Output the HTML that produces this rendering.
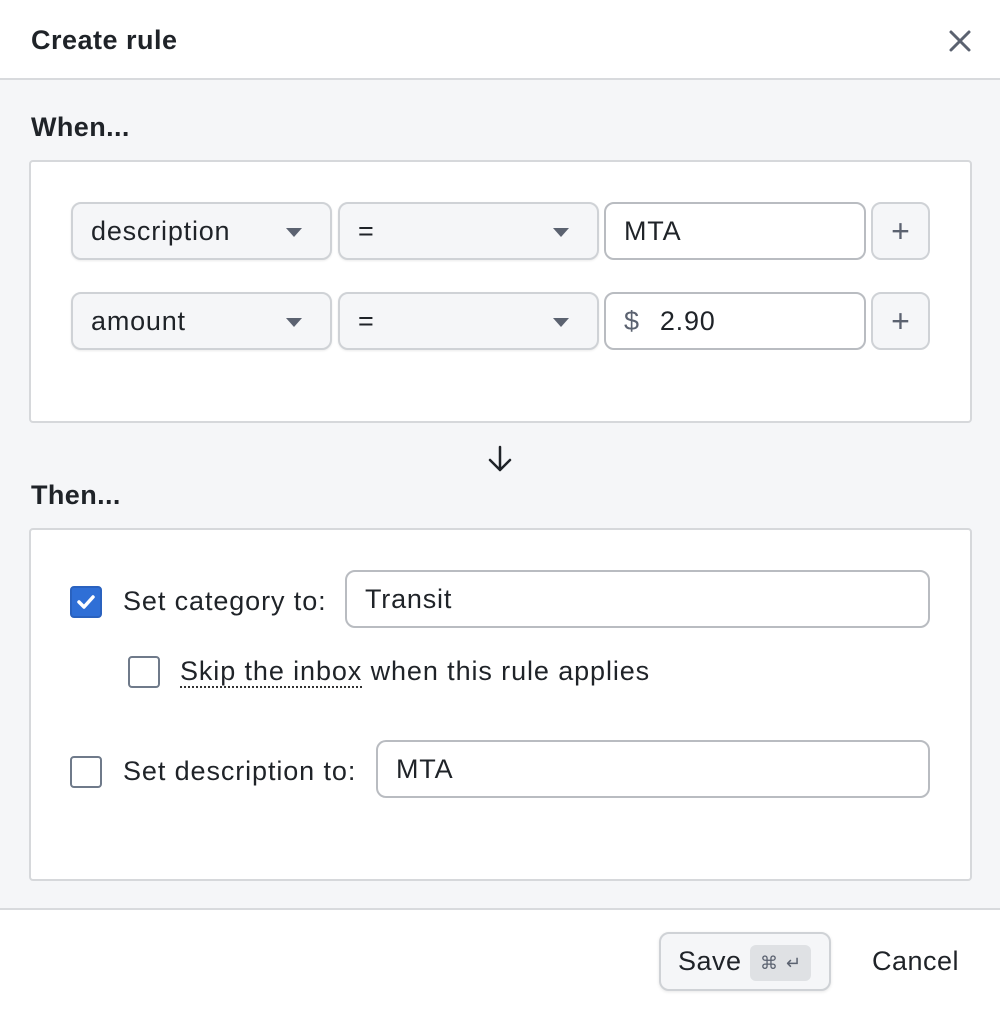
<!DOCTYPE html>
<html><head><style>
*{box-sizing:border-box;margin:0;padding:0}
body{width:1000px;height:1011px;overflow:hidden;font-family:"Liberation Sans",Arial,sans-serif;color:#1f2328;background:#fff;position:relative}
.abs{position:absolute}
.hdr{left:0;top:0;width:1000px;height:80px;border-bottom:2px solid #d8dadd;background:#fff}
.title{left:31px;top:25px;font-size:27px;font-weight:bold;letter-spacing:0.5px}
.body{left:0;top:80px;width:1000px;height:830px;background:#f5f6f8;border-bottom:2px solid #d8dadd}
.h{font-size:27px;font-weight:bold;letter-spacing:0.4px}
.card{background:#fff;border:2px solid #d6d8db;border-radius:4px}
.sel{background:#f5f6f8;border:2px solid #cfd2d6;border-radius:10px;font-size:27px;letter-spacing:0.8px;padding-left:18px;display:flex;align-items:center;box-shadow:0 1px 2px rgba(0,0,0,.08)}
.sel .tri{position:absolute;right:28px;top:24px;width:0;height:0;border-left:8px solid transparent;border-right:8px solid transparent;border-top:9px solid #5b6270}
.inp{background:#fff;border:2px solid #b9bcc1;border-radius:10px;font-size:27px;letter-spacing:0.8px;padding-left:18px;display:flex;align-items:center}
.plus{background:#f5f6f8;border:2px solid #cfd2d6;border-radius:10px;font-size:32px;color:#5b6270;display:flex;align-items:center;justify-content:center}
.cb{width:32px;height:32px;border:2px solid #6f7a8a;border-radius:4px;background:#fff}
.lbl{font-size:27px;letter-spacing:0.9px}
</style></head><body>
<div class="abs hdr"></div>
<div class="abs title">Create rule</div>
<svg class="abs" style="left:948px;top:29px" width="24" height="24" viewBox="0 0 24 24"><path d="M3 3L21 21M21 3L3 21" stroke="#5b6270" stroke-width="3" stroke-linecap="round"/></svg>
<div class="abs body"></div>
<div class="abs h" style="left:31px;top:112px">When...</div>
<div class="abs card" style="left:29px;top:160px;width:943px;height:263px"></div>
<div class="abs sel" style="left:71px;top:202px;width:261px;height:58px">description<span class="tri"></span></div>
<div class="abs sel" style="left:338px;top:202px;width:261px;height:58px">=<span class="tri"></span></div>
<div class="abs inp" style="left:604px;top:202px;width:262px;height:58px">MTA</div>
<div class="abs plus" style="left:871px;top:202px;width:59px;height:58px">+</div>
<div class="abs sel" style="left:71px;top:292px;width:261px;height:58px">amount<span class="tri"></span></div>
<div class="abs sel" style="left:338px;top:292px;width:261px;height:58px">=<span class="tri"></span></div>
<div class="abs inp" style="left:604px;top:292px;width:262px;height:58px"><span style="color:#5b6270;margin-right:20px">$</span>2.90</div>
<div class="abs plus" style="left:871px;top:292px;width:59px;height:58px">+</div>
<svg class="abs" style="left:486px;top:444px" width="28" height="30" viewBox="0 0 28 30"><path d="M14 3V26M4 16L14 26L24 16" stroke="#1f2328" stroke-width="2.5" fill="none" stroke-linecap="round" stroke-linejoin="round"/></svg>
<div class="abs h" style="left:31px;top:480px">Then...</div>
<div class="abs card" style="left:29px;top:528px;width:943px;height:353px"></div>
<div class="abs cb" style="left:70px;top:586px;background:#2f6fd6;border-color:#2a62bf"><svg width="28" height="28" viewBox="0 0 28 28"><path d="M7 14L12 19L21 9" stroke="#fff" stroke-width="3.5" fill="none" stroke-linecap="round" stroke-linejoin="round"/></svg></div>
<div class="abs lbl" style="left:123px;top:586px">Set category to:</div>
<div class="abs inp" style="left:345px;top:570px;width:585px;height:58px">Transit</div>
<div class="abs cb" style="left:128px;top:656px"></div>
<div class="abs lbl" style="left:180px;top:656px"><span style="border-bottom:2px dotted #333">Skip the inbox</span> when this rule applies</div>
<div class="abs cb" style="left:70px;top:756px"></div>
<div class="abs lbl" style="left:123px;top:756px">Set description to:</div>
<div class="abs inp" style="left:376px;top:740px;width:554px;height:58px">MTA</div>
<div class="abs" style="left:659px;top:932px;width:172px;height:59px;background:#f5f6f8;border:2px solid #cfd2d6;border-radius:10px;box-shadow:0 1px 3px rgba(0,0,0,.1)"></div>
<div class="abs lbl" style="left:678px;top:946px;letter-spacing:0.5px">Save</div>
<div class="abs" style="left:750px;top:945px;width:61px;height:36px;background:#dfe1e4;border-radius:6px;color:#5b6270;font-size:18px;display:flex;align-items:center;justify-content:center;gap:8px">⌘<span>↵</span></div>
<div class="abs lbl" style="left:872px;top:946px;letter-spacing:0.5px">Cancel</div>
</body></html>
